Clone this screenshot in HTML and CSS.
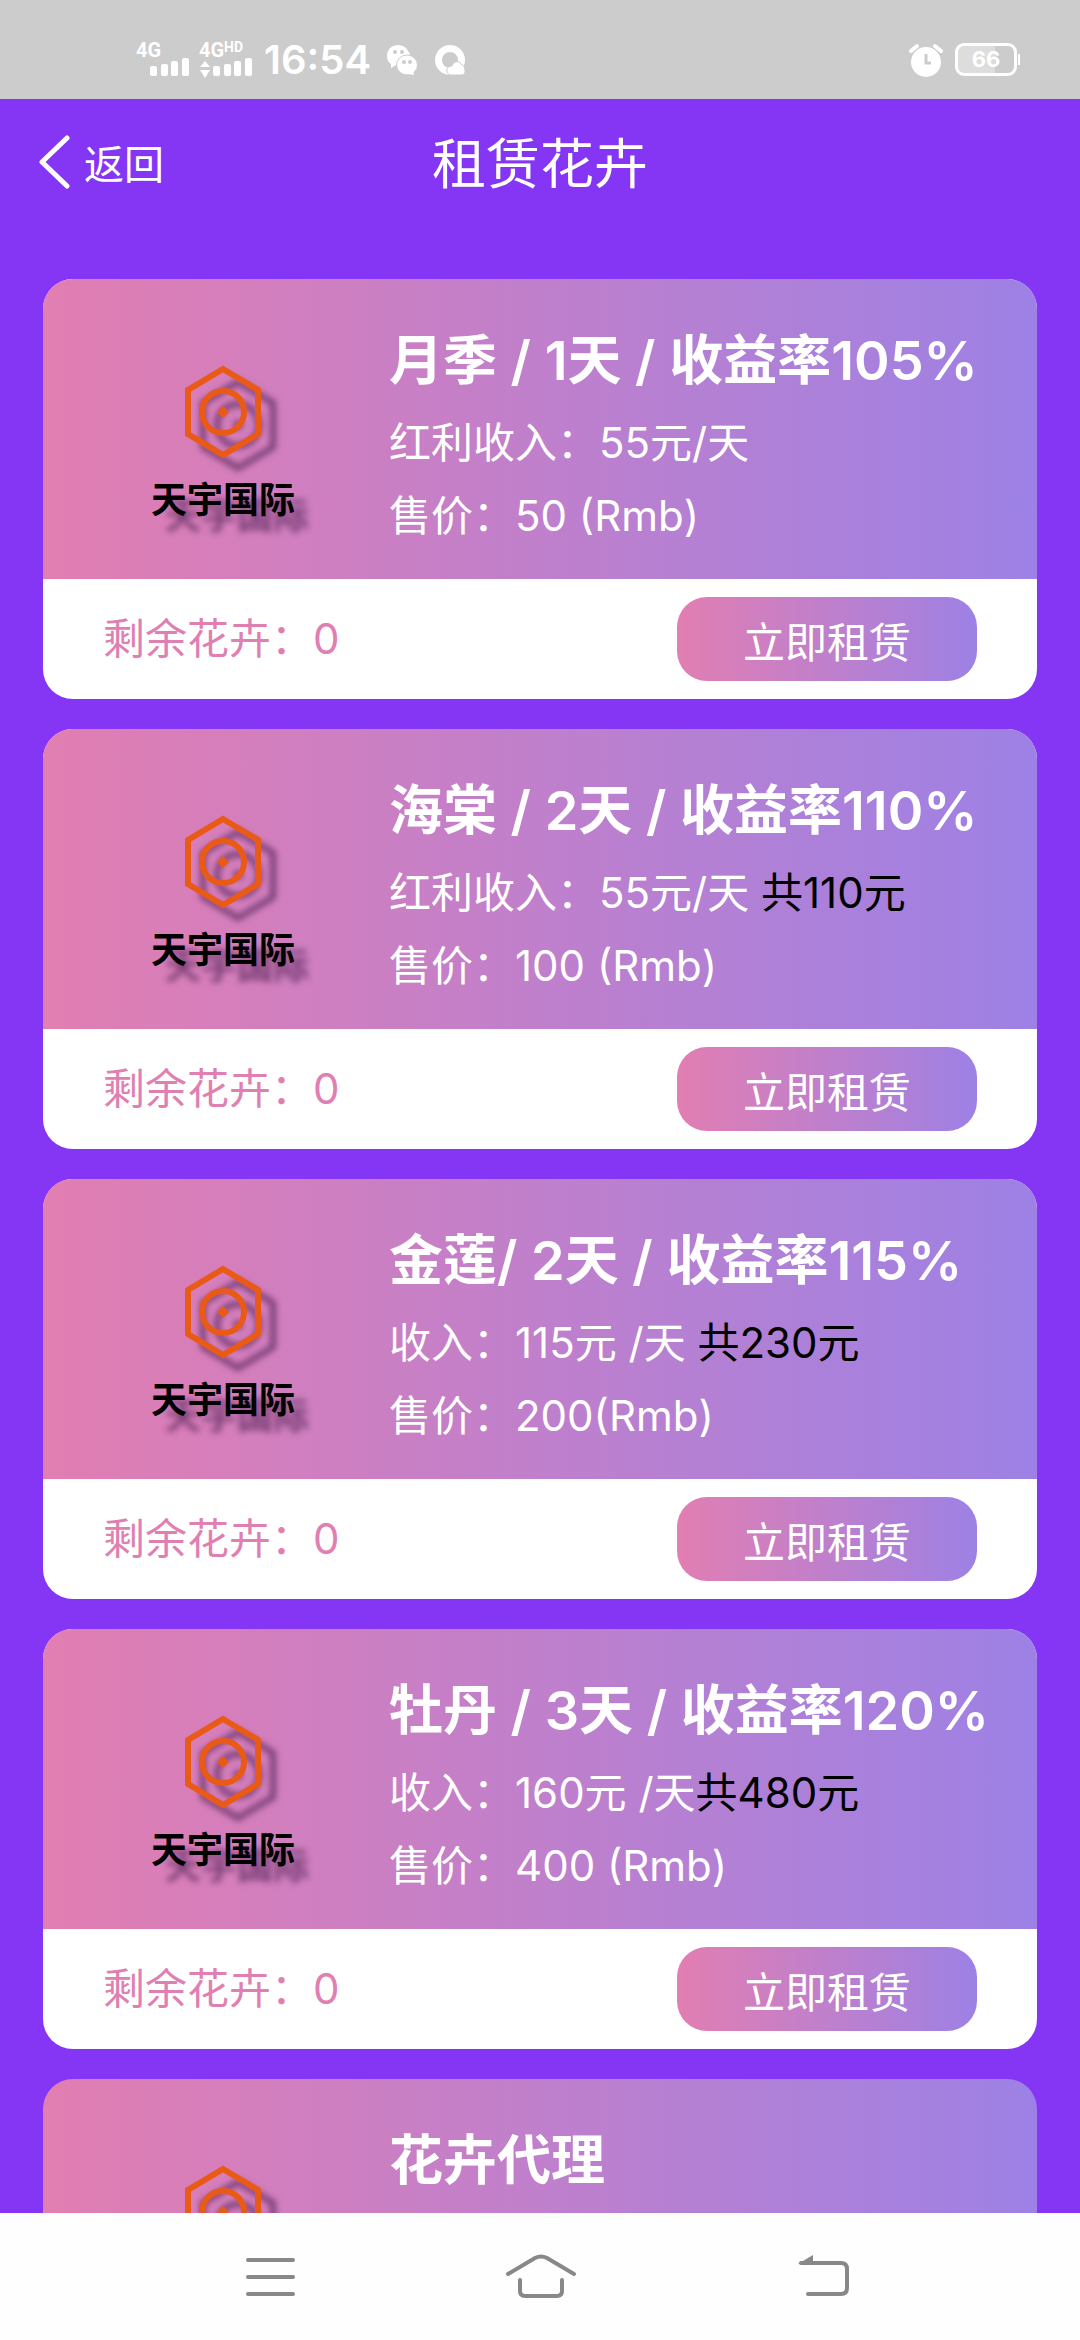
FILE: index.html
```html
<!DOCTYPE html>
<html lang="zh-CN">
<head>
<meta charset="utf-8">
<meta name="viewport" content="width=device-width, initial-scale=1">
<title>租赁花卉</title>
<link rel="stylesheet" href="styles.css">
</head>
<body>
<svg class="defs" aria-hidden="true">
  <symbol id="emblem" viewBox="0 0 82 120">
    <g fill="none" stroke="currentColor">
      <path d="M41 12 L76 33 V77 L41 98 L6 77 V33 Z" stroke-width="6"/>
      <circle cx="41" cy="55" r="21" stroke-width="6"/>
      <path d="M41 49 L47 55 L41 61 L35 55 Z" fill="currentColor" stroke="none"/>
    </g>
  </symbol>
</svg>
<div class="screen">
  <div class="status">
    <div class="status-group">
      <svg class="signals" viewBox="0 0 122 44" aria-hidden="true">
        <g fill="#fff">
          <rect x="14" y="28" width="7" height="10" rx="2"/><rect x="25" y="26" width="7" height="12" rx="2"/><rect x="35" y="23" width="7" height="15" rx="2"/><rect x="46" y="20" width="7" height="18" rx="2"/>
          <rect x="77" y="28" width="7" height="10" rx="2"/><rect x="88" y="26" width="7" height="12" rx="2"/><rect x="98" y="23" width="7" height="15" rx="2"/><rect x="109" y="20" width="7" height="18" rx="2"/>
          <path d="M64 29 L69 23 L74 29 Z M64 32 H74 L69 40 Z"/>
        </g>
        <g class="signal-text" fill="#fff">
          <text x="0" y="19" font-size="20">4G</text>
          <text x="63" y="19" font-size="20">4G</text>
          <text x="88" y="14" font-size="14">HD</text>
        </g>
      </svg>
      <span class="clock">16:54</span>
      <svg class="app-icon" viewBox="0 0 32 32" aria-hidden="true">
        <path fill="#fff" d="M12 1C5 1 1 6 1 12c0 4 1 6 4 8v4l5-3h3a11 10 0 0 1 11-10C22 5 18 1 12 1Z"/>
        <ellipse cx="21" cy="21" rx="10.500" ry="10" fill="#fff" stroke="#ccc" stroke-width="1"/>
        <path fill="#fff" d="M22 30l6 1-1-5Z"/>
        <g fill="#ccc"><circle cx="9" cy="8" r="2"/><circle cx="16" cy="8" r="2"/><circle cx="18" cy="18" r="2"/><circle cx="24" cy="18" r="2"/></g>
      </svg>
      <svg class="app-icon" viewBox="0 0 32 32" aria-hidden="true">
        <circle cx="16" cy="16" r="11.500" fill="none" stroke="#fff" stroke-width="7"/>
        <path d="M13 27c-1-3 2-5 5-5 1-5 8-6 10-1 3 1 3 5 3 7 0 2-2 3-4 3H17c-2 0-4-2-4-4Z" fill="#fff" stroke="#ccc" stroke-width="1"/>
      </svg>
    </div>
    <div class="status-group status-right">
      <svg class="alarm" viewBox="0 0 34 34" aria-hidden="true">
        <circle cx="17" cy="19" r="15" fill="#fff"/>
        <path d="M2 8L8 3M32 8L26 3" stroke="#fff" stroke-width="4" stroke-linecap="round"/>
        <path d="M17 11V20H22" fill="none" stroke="#ccc" stroke-width="3"/>
      </svg>
      <span class="battery">66</span>
    </div>
  </div>

  <header class="topbar">
    <a class="back" href="#">
      <svg class="chevron" viewBox="0 0 34 60" aria-hidden="true"><path d="M31 3 L6 27 L31 51" fill="none" stroke="#fff" stroke-width="5" stroke-linecap="round" stroke-linejoin="round"/></svg>
      <span>返回</span>
    </a>
    <h1 class="title">租赁花卉</h1>
  </header>

  <main class="list">
    <article class="card">
      <div class="info">
        <div class="logo"><svg class="mark" aria-hidden="true"><use href="#emblem"/></svg><span class="brand">天宇国际</span></div>
        <div class="details">
          <h2>月季 / 1天 / 收益率105%</h2>
          <p>红利收入：55元/天</p>
          <p>售价：50 (Rmb)</p>
        </div>
      </div>
      <div class="foot"><span class="stock">剩余花卉：0</span><button class="rent" type="button">立即租赁</button></div>
    </article>
    <article class="card">
      <div class="info">
        <div class="logo"><svg class="mark" aria-hidden="true"><use href="#emblem"/></svg><span class="brand">天宇国际</span></div>
        <div class="details">
          <h2>海棠 / 2天 / 收益率110%</h2>
          <p>红利收入：55元/天 <span class="total">共110元</span></p>
          <p>售价：100 (Rmb)</p>
        </div>
      </div>
      <div class="foot"><span class="stock">剩余花卉：0</span><button class="rent" type="button">立即租赁</button></div>
    </article>
    <article class="card">
      <div class="info">
        <div class="logo"><svg class="mark" aria-hidden="true"><use href="#emblem"/></svg><span class="brand">天宇国际</span></div>
        <div class="details">
          <h2>金莲/ 2天 / 收益率115%</h2>
          <p>收入：115元 /天 <span class="total">共230元</span></p>
          <p>售价：200(Rmb)</p>
        </div>
      </div>
      <div class="foot"><span class="stock">剩余花卉：0</span><button class="rent" type="button">立即租赁</button></div>
    </article>
    <article class="card">
      <div class="info">
        <div class="logo"><svg class="mark" aria-hidden="true"><use href="#emblem"/></svg><span class="brand">天宇国际</span></div>
        <div class="details">
          <h2>牡丹 / 3天 / 收益率120%</h2>
          <p>收入：160元 /天<span class="total">共480元</span></p>
          <p>售价：400 (Rmb)</p>
        </div>
      </div>
      <div class="foot"><span class="stock">剩余花卉：0</span><button class="rent" type="button">立即租赁</button></div>
    </article>
    <article class="card">
      <div class="info">
        <div class="logo"><svg class="mark" aria-hidden="true"><use href="#emblem"/></svg></div>
        <div class="details">
          <h2>花卉代理</h2>
        </div>
      </div>
    </article>
  </main>

  <nav class="navbar" aria-label="系统导航">
    <button type="button" aria-label="菜单"><svg viewBox="0 0 84 48"><path d="M20 8H65M20 25H65M20 42H65" fill="none" stroke="#888" stroke-width="4" stroke-linecap="round"/></svg></button>
    <button type="button" aria-label="主页"><svg viewBox="0 0 84 48"><path d="M10 22 L37 6 Q43 3 49 6 L76 22M22 28V39Q22 44 27 44H59Q64 44 64 39V28" fill="none" stroke="#888" stroke-width="4" stroke-linecap="round"/></svg></button>
    <button type="button" aria-label="返回"><svg viewBox="0 0 84 48"><path d="M33 11H73Q79 11 79 17V36Q79 42 73 42H40" fill="none" stroke="#888" stroke-width="4" stroke-linecap="round"/><path d="M30 12L45 3V12Z" fill="#888"/></svg></button>
  </nav>
</div>
</body>
</html>
```

FILE: styles.css
```css
* { box-sizing: border-box; }

body {
  margin: 0;
  background: #8536f5;
  color: #fff;
  font-family: Inter, "Noto Sans CJK SC", sans-serif;
}

h1, h2, p { margin: 0; font-weight: 400; }
button { border: 0; padding: 0; background: none; font-family: inherit; cursor: pointer; }

.defs { position: absolute; width: 0; height: 0; }

.screen {
  display: flex;
  flex-direction: column;
  height: 100vh;
}

.status {
  flex: none;
  display: flex;
  justify-content: space-between;
  height: 99px;
  padding: 20px 63px 0 136px;
  background: #ccc;
}
.status-group { display: flex; align-items: center; gap: 16px; }
.status-right { gap: 12px; }
.signals { width: 122px; height: 44px; }
.signal-text { font-family: Roboto, sans-serif; font-weight: 700; }
.clock { width: 106px; margin-left: -10px; font-size: 40px; font-weight: 600; line-height: 48px; white-space: nowrap; }
.app-icon { width: 32px; height: 32px; }
.alarm { width: 34px; height: 34px; }
.battery {
  position: relative;
  width: 62px;
  height: 33px;
  border: 3px solid #fff;
  border-radius: 9px;
  background: linear-gradient(90deg, #ddd 66%, #ccc 66%);
  font-size: 22px;
  font-weight: 700;
  line-height: 27px;
  text-align: center;
}
.battery::after {
  content: "";
  position: absolute;
  top: 8px;
  right: -6px;
  width: 2px;
  height: 11px;
  background: #fff;
}

.topbar {
  flex: none;
  display: grid;
  grid-template-columns: 1fr auto 1fr;
  align-items: center;
  height: 132px;
  padding: 0 36px;
}
.back { display: flex; align-items: center; gap: 14px; color: #fff; font-size: 40px; line-height: 60px; text-decoration: none; }
.chevron { width: 34px; height: 60px; }
.title { font-size: 54px; line-height: 80px; }

.list {
  flex: 1;
  min-height: 0;
  overflow: hidden;
  display: flex;
  flex-direction: column;
  gap: 30px;
  padding: 48px 43px 0;
}
.card { flex: none; overflow: hidden; border-radius: 30px; background: #fff; }
.info {
  display: flex;
  height: 300px;
  padding-top: 42px;
  background: linear-gradient(90deg, #e27eb2, #9d81e5);
}
.logo { flex: none; display: flex; flex-direction: column; align-items: center; width: 346px; padding: 36px 0 0 14px; }
.mark { width: 82px; height: 120px; overflow: visible; color: #e95a17; filter: drop-shadow(15px 13px 3px rgba(60, 20, 70, 0.6)); }
.brand { color: #000; font-family: "Noto Sans CJK SC", sans-serif; font-size: 36px; font-weight: 700; line-height: 40px; text-shadow: 14px 16px 6px rgba(60, 20, 70, 0.6); }

.details h2 { margin-bottom: 5px; font-size: 54px; font-weight: 600; line-height: 80px; white-space: nowrap; }
.details p { font-size: 42px; line-height: 73px; white-space: nowrap; }
.total { color: #000; }

.foot { display: flex; align-items: center; justify-content: space-between; height: 120px; padding: 0 60px; }
.stock { color: #e07fb1; font-size: 42px; line-height: 60px; }
.rent {
  width: 300px;
  height: 84px;
  border-radius: 30px;
  background: linear-gradient(90deg, #e27eb2, #9d81e5);
  color: #fff;
  font-size: 42px;
}

.navbar {
  flex: none;
  display: flex;
  justify-content: center;
  gap: 186px;
  height: 127px;
  padding-top: 39px;
  background: #fefefe;
}
.navbar button, .navbar svg { display: block; width: 84px; height: 48px; }
```
